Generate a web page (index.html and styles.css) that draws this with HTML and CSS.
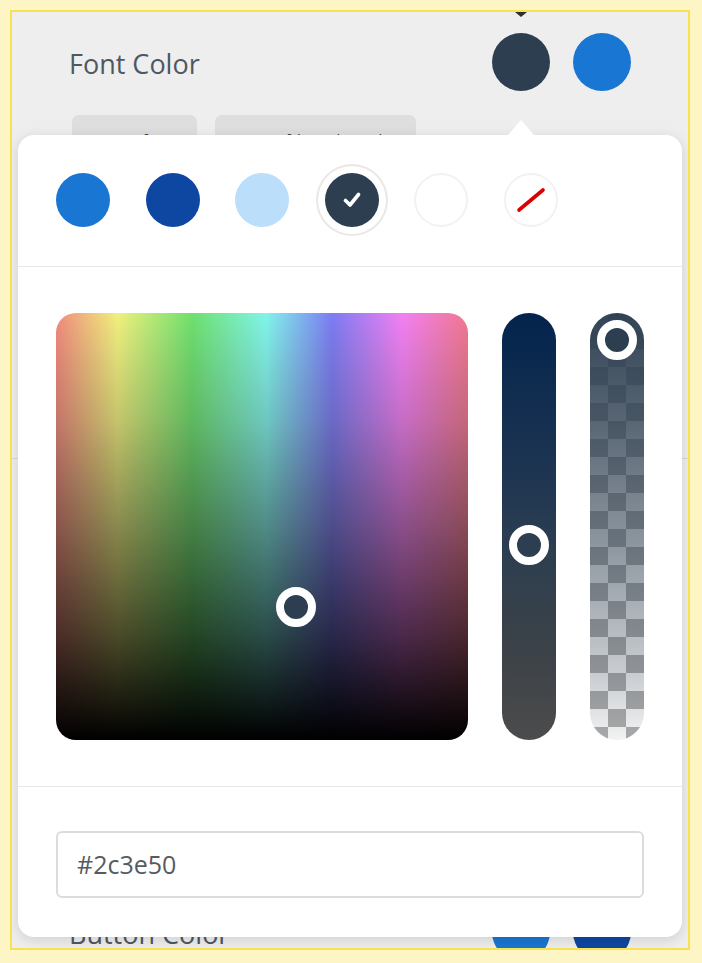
FILE: index.html
```html
<!DOCTYPE html>
<html>
<head>
<meta charset="utf-8">
<link rel="stylesheet" href="styles.css">
</head>
<body>
<div class="frame">
  <div class="panel">
    <span class="tip-arrow"></span>
    <section class="section section-font">
      <div class="setting-row">
        <span class="setting-label">Font Color</span>
        <div class="setting-swatches">
          <span class="dot dot-dark"></span>
          <span class="dot dot-blue"></span>
        </div>
      </div>
      <div class="chips">
        <span class="chip chip-a">normal</span>
        <span class="chip chip-b">line-through</span>
      </div>
    </section>
    <section class="section section-button">
      <div class="setting-row">
        <span class="setting-label">Button Color</span>
        <div class="setting-swatches">
          <span class="dot dot-blue"></span>
          <span class="dot dot-navy"></span>
        </div>
      </div>
    </section>

    <div class="popover">
      <div class="pop-swatches">
        <span class="sw sw-blue"></span>
        <span class="sw sw-navy"></span>
        <span class="sw sw-light"></span>
        <span class="sw sw-dark selected">
          <svg width="18" height="16" viewBox="0 0 18 16"><path d="M2.5 8.5 L7 13 L15.5 2.5" fill="none" stroke="#fff" stroke-width="3.6" stroke-linecap="round" stroke-linejoin="round"/></svg>
        </span>
        <span class="sw sw-white"></span>
        <span class="sw sw-none">
          <svg width="30" height="26" viewBox="0 0 30 26"><line x1="3" y1="23" x2="27" y2="3" stroke="#dd0000" stroke-width="3.6" stroke-linecap="round"/></svg>
        </span>
      </div>
      <div class="pop-picker">
        <div class="sat-box">
          <span class="thumb thumb-sat"></span>
        </div>
        <div class="slider slider-hue">
          <span class="thumb thumb-hue"></span>
        </div>
        <div class="slider slider-alpha">
          <span class="thumb thumb-alpha"></span>
        </div>
      </div>
      <div class="pop-input">
        <div class="hex-input">#2c3e50</div>
      </div>
    </div>
  </div>
</div>
</body>
</html>
```

FILE: styles.css
```css
* { box-sizing: border-box; }

html, body {
  margin: 0;
  padding: 0;
  background: #fdf6c4;
  font-family: "Open Sans", "Noto Sans", sans-serif;
}

.frame {
  margin: 10px;
  width: 680px;
  height: 940px;
  border: 2px solid #f8e34e;
}

.panel {
  position: relative;
  width: 676px;
  height: 936px;
  background: #eeeeee;
  overflow: hidden;
}

.tip-arrow {
  position: absolute;
  left: 503px;
  top: 0;
  width: 0;
  height: 0;
  border-left: 6px solid transparent;
  border-right: 6px solid transparent;
  border-top: 5px solid #2e2e2e;
}

.section-font {
  height: 447px;
  padding-top: 21px;
  border-bottom: 1px solid #d7d7d7;
}

.setting-row {
  display: flex;
  align-items: center;
  justify-content: space-between;
  padding: 0 57px;
  height: 58px;
}

.setting-label {
  font-size: 27px;
  color: #4e5862;
  margin-top: 3px;
}

.setting-swatches {
  display: flex;
  gap: 23px;
}

.dot {
  width: 58px;
  height: 58px;
  border-radius: 50%;
  display: block;
}
.dot-dark { background: #2c3e50; }
.dot-blue { background: #1976d2; }
.dot-navy { background: #0d47a1; }

.chips {
  display: flex;
  gap: 18px;
  margin-top: 24px;
  padding-left: 60px;
}

.chip {
  display: block;
  height: 42px;
  background: #dedede;
  border-radius: 7px;
  font-family: "Liberation Mono", monospace;
  font-size: 14px;
  line-height: 17px;
  padding-top: 18px;
  color: #444;
}
.chip-a { width: 125px; padding-left: 29px; }
.chip-b { width: 201px; padding-left: 71px; }

.section-button {
  padding-top: 444px;
}

/* Popover */
.popover {
  position: absolute;
  left: 6px;
  top: 123px;
  width: 664px;
  height: 802px;
  background: #fff;
  border-radius: 16px;
  box-shadow: 0 3px 14px rgba(0, 0, 0, 0.13);
}
.popover::before {
  content: "";
  position: absolute;
  left: 490px;
  top: -15px;
  border-left: 13px solid transparent;
  border-right: 13px solid transparent;
  border-bottom: 15px solid #fff;
}

.pop-swatches {
  display: flex;
  gap: 35.6px;
  padding: 38px 38px 39px;
  border-bottom: 1px solid #e7e7e7;
}

.sw {
  width: 54px;
  height: 54px;
  border-radius: 50%;
  display: flex;
  align-items: center;
  justify-content: center;
  flex: none;
}
.sw-blue { background: #1976d2; }
.sw-navy { background: #0d47a1; }
.sw-light { background: #bbdefb; }
.sw-dark { background: #2c3e50; }
.sw-dark.selected {
  box-shadow: 0 0 0 7px #fff, 0 0 0 9px #ebe7e4;
}
.sw-white, .sw-none {
  background: #fff;
  border: 2px solid #f2f2f2;
}

.pop-picker {
  display: flex;
  gap: 34px;
  padding: 46px 38px;
  border-bottom: 1px solid #e7e7e7;
}

.sat-box {
  position: relative;
  width: 412px;
  height: 427px;
  border-radius: 20px;
  background:
    linear-gradient(to bottom, rgba(0,0,0,0) 0%, rgba(0,0,0,0.16) 25%, rgba(0,0,0,0.4) 50%, rgba(0,0,0,0.68) 75%, #000 100%),
    linear-gradient(to bottom, rgba(150,150,150,0) 0%, rgba(150,150,150,0.12) 50%, rgba(150,150,150,0) 100%),
    linear-gradient(to right, #f08a7c 0%, #f0f07e 15%, #6ee06e 33%, #82f4ea 51%, #7c7cf2 67%, #f280f2 84%, #f07890 100%);
}

.slider {
  position: relative;
  width: 54px;
  height: 427px;
  border-radius: 27px;
}

.slider-hue {
  background: linear-gradient(to bottom, #03244d 0%, #1c3452 35%, #2c3e50 55%, #3d4248 80%, #4c4c4c 100%);
}

.slider-alpha {
  background-color: #f2f2f2;
  background-image:
    linear-gradient(to bottom, rgba(44,62,80,0.97) 0%, rgba(44,62,80,0.78) 25%, rgba(44,62,80,0.5) 55%, rgba(44,62,80,0.2) 85%, rgba(44,62,80,0) 100%),
    linear-gradient(45deg, #a9a9a9 25%, transparent 25%, transparent 75%, #a9a9a9 75%),
    linear-gradient(45deg, #a9a9a9 25%, transparent 25%, transparent 75%, #a9a9a9 75%);
  background-size: 100% 100%, 36px 36px, 36px 36px;
  background-position: 0 0, 0 0, 18px 18px;
  overflow: hidden;
}

.thumb {
  position: absolute;
  width: 40px;
  height: 40px;
  border-radius: 50%;
  border: 8px solid #fff;
  background: #2c3e50;
}
.thumb-sat { left: 220px; top: 274px; }
.thumb-hue { left: 7px; top: 212px; }
.thumb-alpha { left: 7px; top: 7px; }

.pop-input {
  padding: 44px 38px 39px;
}

.hex-input {
  height: 67px;
  border: 2px solid #dcdcdc;
  border-radius: 6px;
  padding-left: 19px;
  font-size: 25px;
  line-height: 63px;
  color: #555b60;
}
```
